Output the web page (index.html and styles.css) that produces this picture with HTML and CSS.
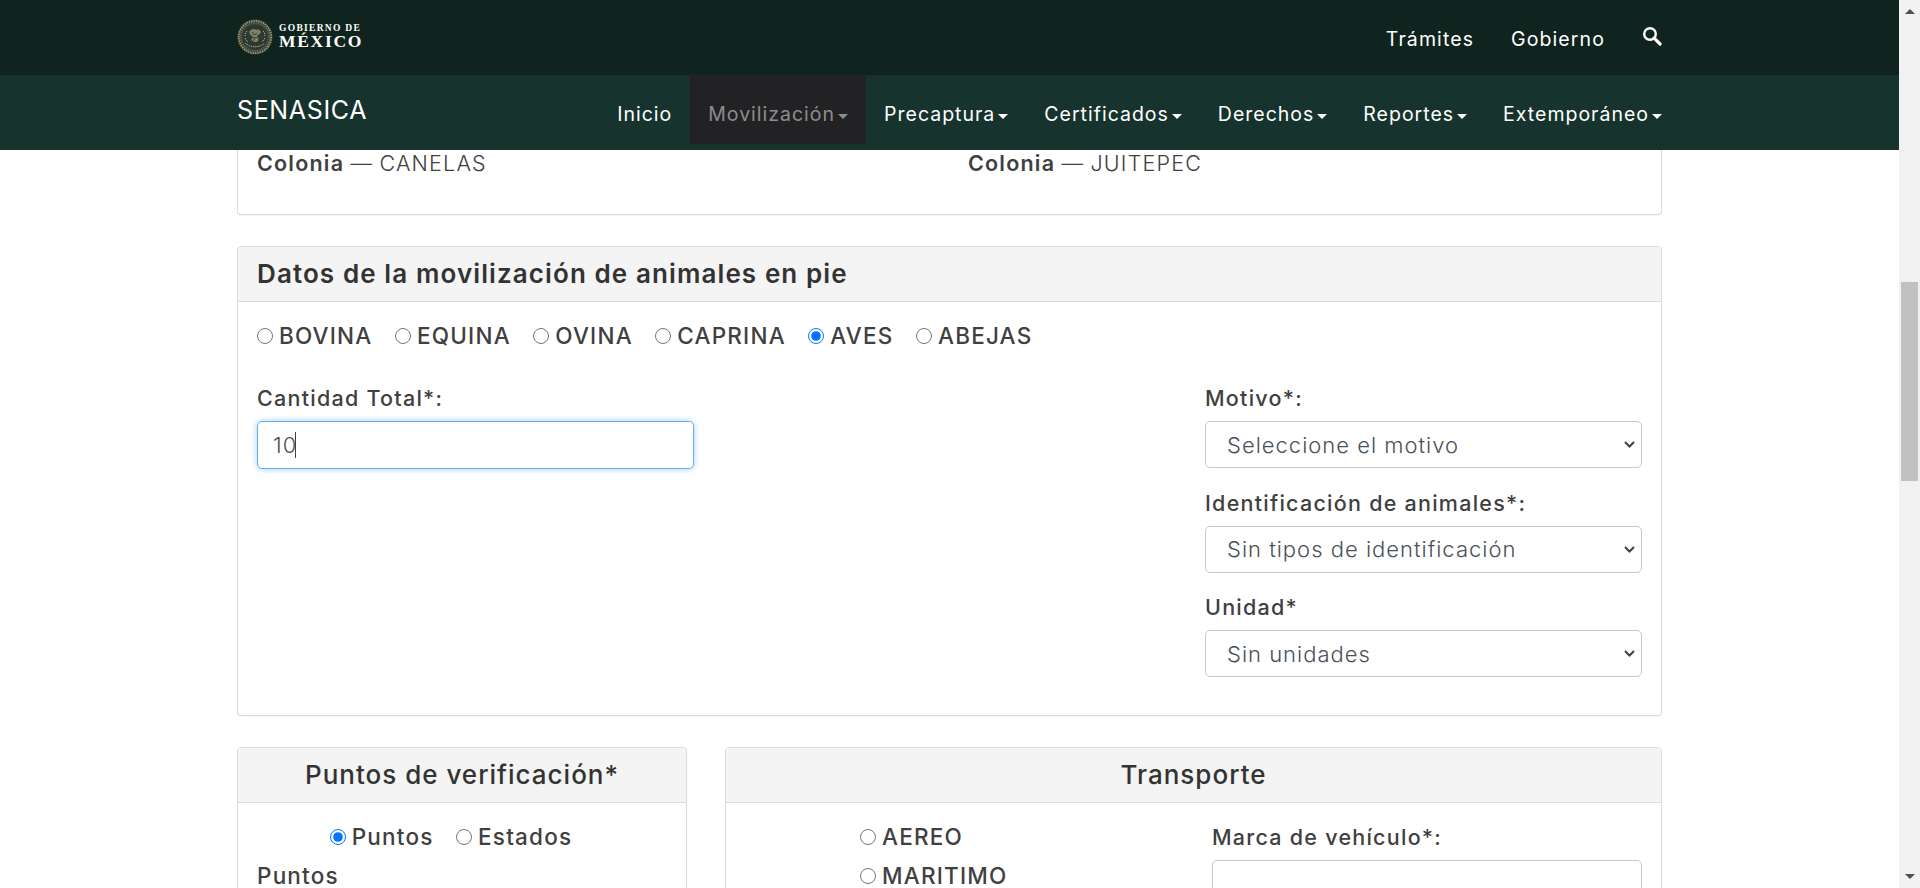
FILE: index.html
```html
<!DOCTYPE html>
<html lang="es">
  <head>
    <title>SENASICA</title>
    <meta charset="utf-8" />
    <meta name="viewport" content="width=device-width, initial-scale=1.0" />
    <link rel="stylesheet" href="styles.css">
  </head>
  <body>
    <div class="window">
      <div class="viewport">
        <header class="topbar">
          <a class="logo" href="#">
            <svg class="seal" viewBox="0 0 36 36" width="36" height="36" aria-hidden="true">
              <circle cx="18" cy="18" r="17.6" fill="#3f4639" />
              <circle cx="18" cy="18" r="16.2" fill="none" stroke="#a5a386" stroke-width="1.6" stroke-dasharray="1.3 1.1" />
              <circle cx="18" cy="18" r="14.2" fill="none" stroke="#70725c" stroke-width="1.6" stroke-dasharray=".9 1.5" />
              <circle cx="18" cy="18" r="12.6" fill="#2b3a30" />
              <path d="M12 13c2-3 5-4 7-2 2-1 4 0 5 2-1 2-2 3-4 3 1 2 2 4 1 6-2 2-5 1-7-1 1-1 2-3 1-4-1 0-2-2-3-4z" fill="#7f8169" />
              <path d="M15 13l2 3 3-2M14 18l4 1 3-1M16 22l2-3" fill="none" stroke="#2b3a30" stroke-width=".9" />
              <path d="M8.5 24c4 5 15 5 19 0M8 19c1 2 2 3 3 4M28 19c-1 2-2 3-3 4M10 12c-2 2-2 4-2 5M26 12c2 2 2 4 2 5" fill="none" stroke="#a9a78a" stroke-width="1" stroke-dasharray="1.4 .7" />
            </svg>
            <span class="logo-text">
              <span class="logo-small">GOBIERNO DE</span>
              <span class="logo-big">MÉXICO</span>
            </span>
          </a>
          <nav class="toplinks">
            <a href="#">Trámites</a>
            <a href="#">Gobierno</a>
            <a href="#" class="search" aria-label="Buscar">
              <svg viewBox="0 0 20 20" width="20" height="20">
                <circle cx="8" cy="8" r="5.8" fill="none" stroke="#fff" stroke-width="2.4" />
                <path d="M12.2 12.2 18 18" stroke="#fff" stroke-width="3.2" stroke-linecap="round" />
              </svg>
            </a>
          </nav>
        </header>

        <nav class="navbar">
          <a class="brand" href="#">SENASICA</a>
          <ul class="menu">
            <li><a href="#">Inicio</a></li>
            <li class="active"><a href="#" class="dropdown">Movilización</a></li>
            <li><a href="#" class="dropdown">Precaptura</a></li>
            <li><a href="#" class="dropdown">Certificados</a></li>
            <li><a href="#" class="dropdown">Derechos</a></li>
            <li><a href="#" class="dropdown">Reportes</a></li>
            <li><a href="#" class="dropdown">Extemporáneo</a></li>
          </ul>
        </nav>

        <main class="content">
          <section class="card card-cut">
            <div class="address-row">
              <p><strong>Colonia</strong> — CANELAS</p>
              <p><strong>Colonia</strong> — JUITEPEC</p>
            </div>
          </section>

          <section class="card card-animals">
            <h2 class="card-header">Datos de la movilización de animales en pie</h2>
            <div class="card-body">
              <div class="radio-row species">
                <label><input type="radio" name="especie" /> BOVINA</label>
                <label><input type="radio" name="especie" /> EQUINA</label>
                <label><input type="radio" name="especie" /> OVINA</label>
                <label><input type="radio" name="especie" /> CAPRINA</label>
                <label><input type="radio" name="especie" checked /> AVES</label>
                <label><input type="radio" name="especie" /> ABEJAS</label>
              </div>
              <div class="animal-fields">
                <div class="field">
                  <label for="cantidad">Cantidad Total*:</label>
                  <div class="has-caret">
                    <input id="cantidad" class="control" type="text" value="10" autofocus />
                  </div>
                </div>
                <div class="field-stack">
                  <div class="field">
                    <label for="motivo">Motivo*:</label>
                    <select id="motivo" class="control"><option>Seleccione el motivo</option></select>
                  </div>
                  <div class="field">
                    <label for="ident">Identificación de animales*:</label>
                    <select id="ident" class="control"><option>Sin tipos de identificación</option></select>
                  </div>
                  <div class="field">
                    <label for="unidad">Unidad*</label>
                    <select id="unidad" class="control"><option>Sin unidades</option></select>
                  </div>
                </div>
              </div>
            </div>
          </section>

          <div class="bottom-cards">
            <section class="card">
              <h2 class="card-header centered">Puntos de verificación*</h2>
              <div class="card-body">
                <div class="radio-row points">
                  <label><input type="radio" name="puntos" checked /> Puntos</label>
                  <label><input type="radio" name="puntos" /> Estados</label>
                </div>
                <div class="plain-label">Puntos</div>
              </div>
            </section>
            <section class="card">
              <h2 class="card-header centered">Transporte</h2>
              <div class="card-body transport">
                <div class="transport-types">
                  <label><input type="radio" name="transporte" /> AEREO</label>
                  <label><input type="radio" name="transporte" /> MARITIMO</label>
                </div>
                <div class="field field-narrow">
                  <label for="marca">Marca de vehículo*:</label>
                  <input id="marca" class="control" type="text" />
                </div>
              </div>
            </section>
          </div>
        </main>
      </div>

      <div class="scrollbar" aria-hidden="true">
        <span class="arrow arrow-up"></span>
        <div class="track"><span class="thumb"></span></div>
        <span class="arrow arrow-down"></span>
      </div>
    </div>
  </body>
</html>
```

FILE: styles.css
```css
* {
  box-sizing: border-box;
}
html,
body {
  margin: 0;
  height: 100%;
  overflow: hidden;
}
body {
  font-family: Inter, "Open Sans", sans-serif;
  color: #404041;
  background: #fff;
}
a {
  color: inherit;
  text-decoration: none;
}

.window {
  display: flex;
  height: 888px;
}
.viewport {
  flex: 1;
  min-width: 0;
  display: flex;
  flex-direction: column;
}

/* top bars */
.topbar {
  height: 75px;
  flex: none;
  background: #0f241e;
  color: #fff;
  padding: 0 237px;
  display: flex;
  align-items: center;
  justify-content: space-between;
}
.logo {
  display: flex;
  align-items: center;
  gap: 6px;
  margin-top: -2px;
}
.logo-text {
  display: flex;
  flex-direction: column;
  font-family: "Liberation Serif", serif;
  font-weight: 700;
  color: #fff;
}
.logo-small {
  font-size: 9.5px;
  line-height: 10px;
  letter-spacing: 1.3px;
}
.logo-big {
  font-size: 17.5px;
  line-height: 17px;
  letter-spacing: 1.7px;
}
.toplinks {
  display: flex;
  align-items: center;
  gap: 37px;
  font-size: 19.5px;
  letter-spacing: 1.1px;
  padding-top: 2px;
}
.search {
  display: flex;
  margin-top: -6px;
}

.navbar {
  height: 75px;
  flex: none;
  background: #16332d;
  color: #fff;
  padding: 0 237px;
  display: flex;
  justify-content: space-between;
}
.brand {
  font-size: 25px;
  line-height: 71px;
  letter-spacing: .65px;
}
.menu {
  list-style: none;
  margin: 0 -18px 0 0;
  padding: 0;
  display: flex;
  font-size: 19.5px;
  letter-spacing: 1px;
}
.menu a {
  display: block;
  height: 69px;
  line-height: 79px;
  padding: 0 18px;
}
.menu .active a {
  background: #222224;
  color: #8d8d8d;
}
.dropdown::after {
  content: "";
  display: inline-block;
  vertical-align: 2px;
  margin-left: 3px;
  border-top: 5px solid currentColor;
  border-left: 5px solid transparent;
  border-right: 5px solid transparent;
}

/* scrolled content, cut off by the bars */
.content {
  flex: 1;
  min-height: 0;
  overflow: hidden;
  padding: 0 237px;
}
.card {
  border: 1px solid #dcdcdc;
  border-radius: 4px;
  box-shadow: 0 1px 1px rgba(0, 0, 0, .05);
  background: #fff;
}
.card-cut {
  height: 65px;
  border-top: 0;
  border-radius: 0 0 4px 4px;
  padding: 0 19px;
  margin-bottom: 31px;
}
.address-row {
  display: grid;
  grid-template-columns: 711px 1fr;
  font-size: 21.5px;
  font-weight: 300;
  letter-spacing: 1.2px;
  word-spacing: -1px;
}
.address-row p {
  margin: 0;
  line-height: 26px;
}
.address-row strong {
  font-weight: 600;
}
.card-header {
  margin: 0;
  height: 55px;
  padding: 0 19px;
  background: #f4f4f4;
  border-bottom: 1px solid #dcdcdc;
  border-radius: 4px 4px 0 0;
  font-size: 26px;
  line-height: 53px;
  font-weight: 600;
  color: #333;
  letter-spacing: 1.1px;
}
.card-header.centered {
  text-align: center;
  font-weight: 500;
  letter-spacing: 1px;
}
.card-body {
  padding: 19px 19px 0;
}
.card-animals .card-body {
  padding-bottom: 38px;
}

/* form bits */
.radio-row,
.transport-types {
  font-size: 22.5px;
  font-weight: 500;
  letter-spacing: 1.2px;
}
.radio-row {
  display: flex;
  gap: 22.5px;
}
.radio-row label {
  display: flex;
  align-items: center;
  line-height: 30px;
}
.transport-types label {
  display: flex;
  align-items: center;
  line-height: 24px;
}
input[type="radio"] {
  width: 16px;
  height: 16px;
  margin: 0 6px 0 0;
  flex: none;
}
.animal-fields {
  display: flex;
  justify-content: space-between;
  margin-top: 32px;
}
.field {
  width: 437px;
}
.field-narrow {
  width: 430px;
  margin-left: auto;
}
.field label {
  display: block;
  font-size: 21.5px;
  font-weight: 500;
  line-height: 30px;
  margin-bottom: 8px;
  letter-spacing: 1.25px;
}
.field-stack {
  display: flex;
  flex-direction: column;
  gap: 19.5px;
}
.control {
  display: block;
  width: 100%;
  height: 48px;
  padding: 0 15px;
  background: #fff;
  border: 1px solid #c6c9cc;
  border-radius: 5px;
  font: 300 22px Inter, "Open Sans", sans-serif;
  letter-spacing: 1px;
  color: #495057;
  outline: 0;
}
.control:focus {
  border-color: #66afe9;
  box-shadow: 0 0 6px rgba(102, 175, 233, .6);
  caret-color: transparent;
}
select.control {
  height: 47px;
  padding: 0 21px;
  appearance: none;
  background: #fff url("data:image/svg+xml,%3Csvg xmlns='http://www.w3.org/2000/svg' width='11' height='7'%3E%3Cpath d='M1 1l4.5 4.5L10 1' fill='none' stroke='%23404040' stroke-width='2'/%3E%3C/svg%3E") no-repeat right 6px center;
}
/* the text cursor does not show up in the picture by itself */
.has-caret {
  position: relative;
}
.has-caret::after {
  content: "";
  position: absolute;
  left: 38px;
  top: 11px;
  width: 1px;
  height: 26px;
  background: #404041;
}

.bottom-cards {
  display: grid;
  grid-template-columns: 450px 937px;
  gap: 38px;
  margin-top: 31px;
}
.points {
  justify-content: center;
  padding-right: 22px;
}
.plain-label {
  margin-top: 12px;
  font-size: 22.5px;
  font-weight: 500;
  line-height: 24px;
  letter-spacing: 1.2px;
}
.transport {
  display: flex;
  padding-left: 134px;
}
.transport-types {
  display: flex;
  flex-direction: column;
  gap: 15px;
  padding-top: 3px;
}

/* windows style scrollbar */
.scrollbar {
  width: 21px;
  flex: none;
  background: #f1f1f1;
  display: flex;
  flex-direction: column;
  align-items: center;
}
.arrow {
  flex: none;
  width: 0;
  height: 0;
  margin: 9px 0;
  border-left: 5px solid transparent;
  border-right: 5px solid transparent;
}
.arrow-up {
  border-bottom: 5px solid #505050;
}
.arrow-down {
  border-top: 5px solid #505050;
}
.track {
  flex: 1;
  width: 100%;
  padding: 259px 2px 0;
}
.thumb {
  display: block;
  height: 199px;
  background: #c1c1c1;
}
```
